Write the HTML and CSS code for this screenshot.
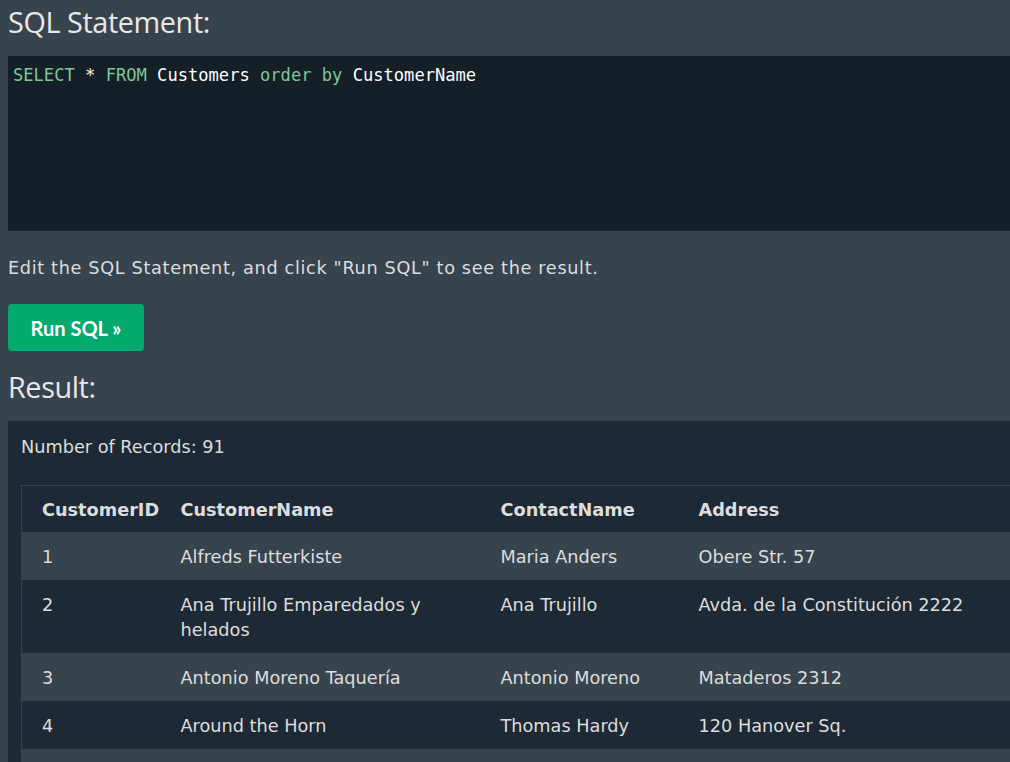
FILE: index.html
```html
<!DOCTYPE html>
<html>
<head>
<meta charset="utf-8">
<link rel="stylesheet" href="styles.css">
</head>
<body>
<div class="page">
  <h2 class="title">SQL Statement:</h2>
  <div class="code"><span class="kw">SELECT</span> * <span class="kw">FROM</span> Customers <span class="kw">order by</span> CustomerName</div>
  <p class="hint">Edit the SQL Statement, and click "Run SQL" to see the result.</p>
  <button class="run">Run SQL »</button>
  <h2 class="title result-title">Result:</h2>
  <div class="result">
    <div class="count">Number of Records: 91</div>
    <table class="grid">
      <colgroup>
        <col class="c1"><col class="c2"><col class="c3"><col class="c4">
      </colgroup>
      <thead>
        <tr><th>CustomerID</th><th>CustomerName</th><th>ContactName</th><th>Address</th></tr>
      </thead>
      <tbody>
        <tr class="alt"><td>1</td><td>Alfreds Futterkiste</td><td>Maria Anders</td><td>Obere Str. 57</td></tr>
        <tr><td>2</td><td>Ana Trujillo Emparedados y helados</td><td>Ana Trujillo</td><td>Avda. de la Constitución 2222</td></tr>
        <tr class="alt"><td>3</td><td>Antonio Moreno Taquería</td><td>Antonio Moreno</td><td>Mataderos 2312</td></tr>
        <tr><td>4</td><td>Around the Horn</td><td>Thomas Hardy</td><td>120 Hanover Sq.</td></tr>
        <tr class="alt"><td>&nbsp;</td><td>&nbsp;</td><td>&nbsp;</td><td>&nbsp;</td></tr>
      </tbody>
    </table>
  </div>
</div>
</body>
</html>
```
FILE: styles.css
```css
html, body {
  margin: 0;
  padding: 0;
  background: #38444d;
  overflow: hidden;
  height: 762px;
}
.page {
  width: 1200px;
  padding: 0 0 0 8px;
  color: #ddd;
  font-family: "DejaVu Sans", Verdana, sans-serif;
  font-size: 17.7px;
}
.title {
  margin: 0;
  font-family: "Open Sans", "Noto Sans", sans-serif;
  font-weight: 400;
  font-size: 28.8px;
  line-height: 44px;
  color: #e8e8e8;
  letter-spacing: -0.4px;
}
.code {
  margin-top: 12px;
  height: 175px;
  box-sizing: border-box;
  background: #151f28;
  padding: 8px 5px;
  font-family: "DejaVu Sans Mono", "Liberation Mono", monospace;
  font-size: 17.1px;
  line-height: 22px;
  color: #fff;
}
.kw { color: #7ec699; }
.hint {
  margin: 25px 0 0;
  line-height: 24px;
  font-size: 17.7px;
  letter-spacing: 0.65px;
  color: #ddd;
}
.run {
  display: block;
  margin-top: 24px;
  width: 136px;
  height: 47px;
  border: 0;
  border-radius: 4px;
  background: #04aa6d;
  color: #fff;
  font-family: Lato, "Open Sans", sans-serif;
  font-weight: 700;
  font-size: 20px;
  padding: 0;
}
.result-title {
  margin-top: 14px;
}
.result {
  margin-top: 12px;
  background: #1d2a35;
  padding: 13px 0 0 13px;
  height: 400px;
}
.count {
  line-height: 24px;
  padding-top: 1px;
  color: #ddd;
}
.grid {
  margin-top: 26px;
  border-collapse: collapse;
  border-top: 1px solid #38444d;
  border-left: 1px solid #38444d;
  table-layout: fixed;
  width: 1100px;
}
.c1 { width: 151px; }
.c2 { width: 320px; }
.c3 { width: 198px; }
.c4 { width: 431px; }
.grid th, .grid td {
  text-align: left;
  vertical-align: top;
  padding: 13px 8px 10px;
  line-height: 25px;
  color: #ddd;
}
.grid th {
  font-weight: 700;
  padding: 12px 8px 9px;
  background: #1d2a35;
}
.grid th:first-child, .grid td:first-child {
  padding-left: 20px;
}
.grid tr.alt td { background: #38444d; }
.grid td { background: #1d2a35; }
```
